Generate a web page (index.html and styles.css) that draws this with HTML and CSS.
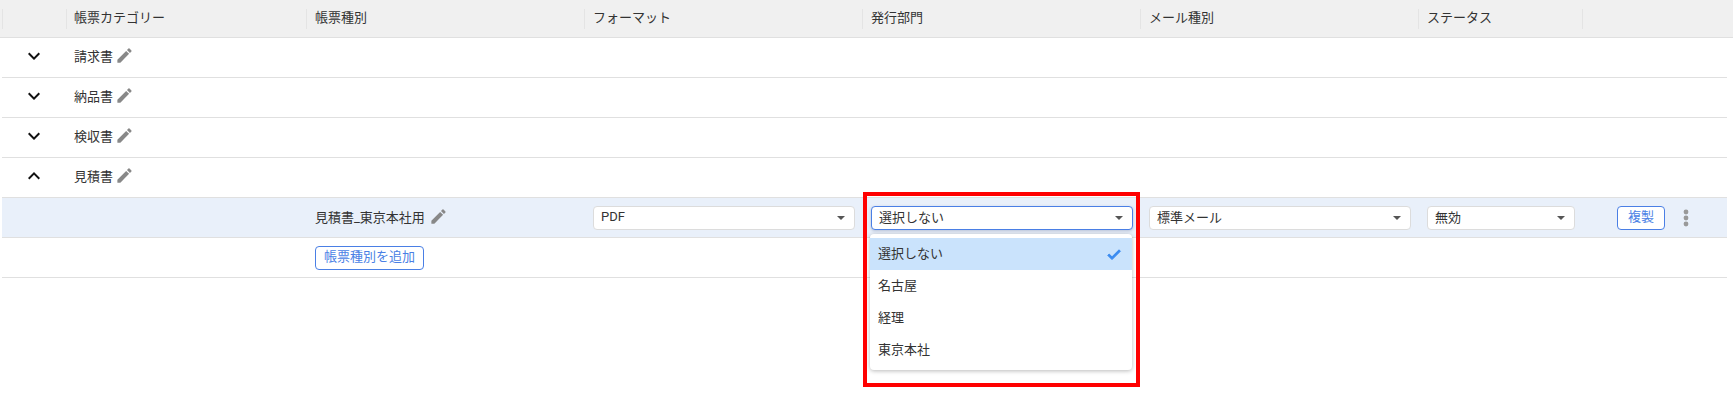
FILE: index.html
```html
<!DOCTYPE html>
<html lang="ja">
<head>
<meta charset="utf-8">
<title>帳票設定</title>
<link rel="stylesheet" href="styles.css">
</head>
<body>
<svg class="sprite" width="0" height="0" aria-hidden="true">
  <symbol id="pencil" viewBox="0 0 24 24"><path d="M3 17.25V21h3.75L17.81 9.94l-3.75-3.75L3 17.25zM20.71 7.04a1 1 0 0 0 0-1.41l-2.34-2.34a1 1 0 0 0-1.41 0l-1.83 1.83 3.75 3.75 1.83-1.83z"/></symbol>
  <symbol id="down" viewBox="0 0 24 24"><path d="M16.59 8.59L12 13.17 7.41 8.59 6 10l6 6 6-6z"/></symbol>
  <symbol id="up" viewBox="0 0 24 24"><path d="M12 8l-6 6 1.41 1.41L12 10.83l4.59 4.58L18 14z"/></symbol>
</svg>
<div class="header">
  <div class="cols">
    <div class="hcell"></div>
    <div class="hcell">帳票カテゴリー</div>
    <div class="hcell">帳票種別</div>
    <div class="hcell">フォーマット</div>
    <div class="hcell">発行部門</div>
    <div class="hcell">メール種別</div>
    <div class="hcell">ステータス</div>
    <div class="hcell"></div>
  </div>
</div>
<div class="body">
  <div class="cols row">
    <div class="cell center"><svg class="chev"><use href="#down"/></svg></div>
    <div class="cell">請求書<svg class="pen"><use href="#pencil"/></svg></div>
  </div>
  <div class="cols row">
    <div class="cell center"><svg class="chev"><use href="#down"/></svg></div>
    <div class="cell">納品書<svg class="pen"><use href="#pencil"/></svg></div>
  </div>
  <div class="cols row">
    <div class="cell center"><svg class="chev"><use href="#down"/></svg></div>
    <div class="cell">検収書<svg class="pen"><use href="#pencil"/></svg></div>
  </div>
  <div class="cols row">
    <div class="cell center"><svg class="chev"><use href="#up"/></svg></div>
    <div class="cell">見積書<svg class="pen"><use href="#pencil"/></svg></div>
  </div>
  <div class="cols row selected">
    <div class="cell"></div>
    <div class="cell"></div>
    <div class="cell name">見積書_東京本社用<svg class="pen"><use href="#pencil"/></svg></div>
    <div class="cell ctl"><div class="select"><span>PDF</span><i class="caret"></i></div></div>
    <div class="cell ctl dept">
      <div class="select focused"><span>選択しない</span><i class="caret"></i></div>
      <div class="menu">
        <div class="option active"><span>選択しない</span><svg class="check" viewBox="0 0 24 24"><path d="M9 16.2L4.8 12l-2.1 2.1L9 20.4 21.6 7.8l-2.1-2.1z"/></svg></div>
        <div class="option">名古屋</div>
        <div class="option">経理</div>
        <div class="option">東京本社</div>
      </div>
      <div class="callout"></div>
    </div>
    <div class="cell ctl"><div class="select"><span>標準メール</span><i class="caret"></i></div></div>
    <div class="cell ctl"><div class="select"><span>無効</span><i class="caret"></i></div></div>
    <div class="cell actions">
      <button class="btn" type="button">複製</button>
      <svg class="more" viewBox="0 0 24 24"><circle cx="12" cy="6" r="2.4"/><circle cx="12" cy="12" r="2.4"/><circle cx="12" cy="18" r="2.4"/></svg>
    </div>
  </div>
  <div class="cols row">
    <div class="cell"></div>
    <div class="cell"></div>
    <div class="cell ctl"><button class="btn add" type="button">帳票種別を追加</button></div>
  </div>
</div>
</body>
</html>
```
FILE: styles.css
```css
* { box-sizing: border-box; }
html, body { margin: 0; padding: 0; background: #fff; }
body {
  width: 1733px;
  height: 401px;
  overflow: hidden;
  font-family: Roboto, "Noto Sans CJK JP", sans-serif;
  font-size: 13px;
  color: #333;
}
.sprite { position: absolute; }
.cols {
  display: grid;
  grid-template-columns: 64px 240px 278px 278px 278px 278px 164px 145px;
}
.header {
  height: 38px;
  padding-left: 2px;
  background: #f0f0f0;
  border-bottom: 1px solid #e0e0e0;
}
.header .cols { height: 37px; align-items: center; }
.hcell {
  height: 20px;
  line-height: 17px;
  padding-left: 8px;
  border-left: 1px solid #e4e4e4;
}
.hcell:nth-child(2) { padding-left: 7px; }
.body { margin: 0 6px 0 2px; }
.row { height: 40px; border-bottom: 1px solid #e0e0e0; }
.row.selected { background: #e9f0fa; }
.cell {
  display: flex;
  align-items: center;
  min-width: 0;
  padding: 0 8px 4px;
}
.cell.name { padding-left: 9px; padding-bottom: 3px; }
.cell.ctl { padding: 0 7px 0 9px; }
.center { justify-content: center; padding: 0 0 3px; }
.chev { width: 24px; height: 24px; fill: #111; }
.pen { width: 19px; height: 19px; margin-left: 2px; fill: #888; }
.name .pen { margin-left: 4px; }
.select {
  display: flex;
  align-items: center;
  justify-content: space-between;
  width: 100%;
  height: 24px;
  padding: 0 9px 2px 7px;
  background: #fff;
  border: 1px solid #dcdcdc;
  border-radius: 4px;
}
.select.focused {
  border-color: #4a7fe5;
  box-shadow: 0 1px 3px rgba(60, 80, 130, .3);
}
.caret {
  width: 0;
  height: 0;
  margin-top: 2px;
  border-left: 4px solid transparent;
  border-right: 4px solid transparent;
  border-top: 4px solid #555;
}
.dept { position: relative; }
.menu {
  position: absolute;
  left: 8px;
  top: 36px;
  width: 262px;
  padding: 4px 0;
  background: #fff;
  border-radius: 4px;
  box-shadow: 0 1px 4px rgba(0, 0, 0, .28);
  z-index: 2;
}
.option {
  display: flex;
  align-items: center;
  justify-content: space-between;
  height: 32px;
  padding: 0 10px 4px 8px;
}
.option.active { background: #cae3fc; }
.check {
  width: 16px;
  height: 16px;
  margin-bottom: -4px;
  fill: #3a8bf0;
  stroke: #3a8bf0;
  stroke-width: 1.5;
}
.callout {
  position: absolute;
  left: 1px;
  top: -6px;
  width: 277px;
  height: 195px;
  border: 4px solid #f00;
  z-index: 3;
  pointer-events: none;
}
.cell.actions { padding: 0 0 0 35px; gap: 9px; }
.btn {
  height: 24px;
  padding: 0 10px 2px;
  font: inherit;
  line-height: 19px;
  color: #4a7fe5;
  background: #fff;
  border: 1px solid #4a7fe5;
  border-radius: 4px;
}
.btn.add { padding: 0 8px 2px; }
.more { width: 24px; height: 24px; fill: #999; }
```
